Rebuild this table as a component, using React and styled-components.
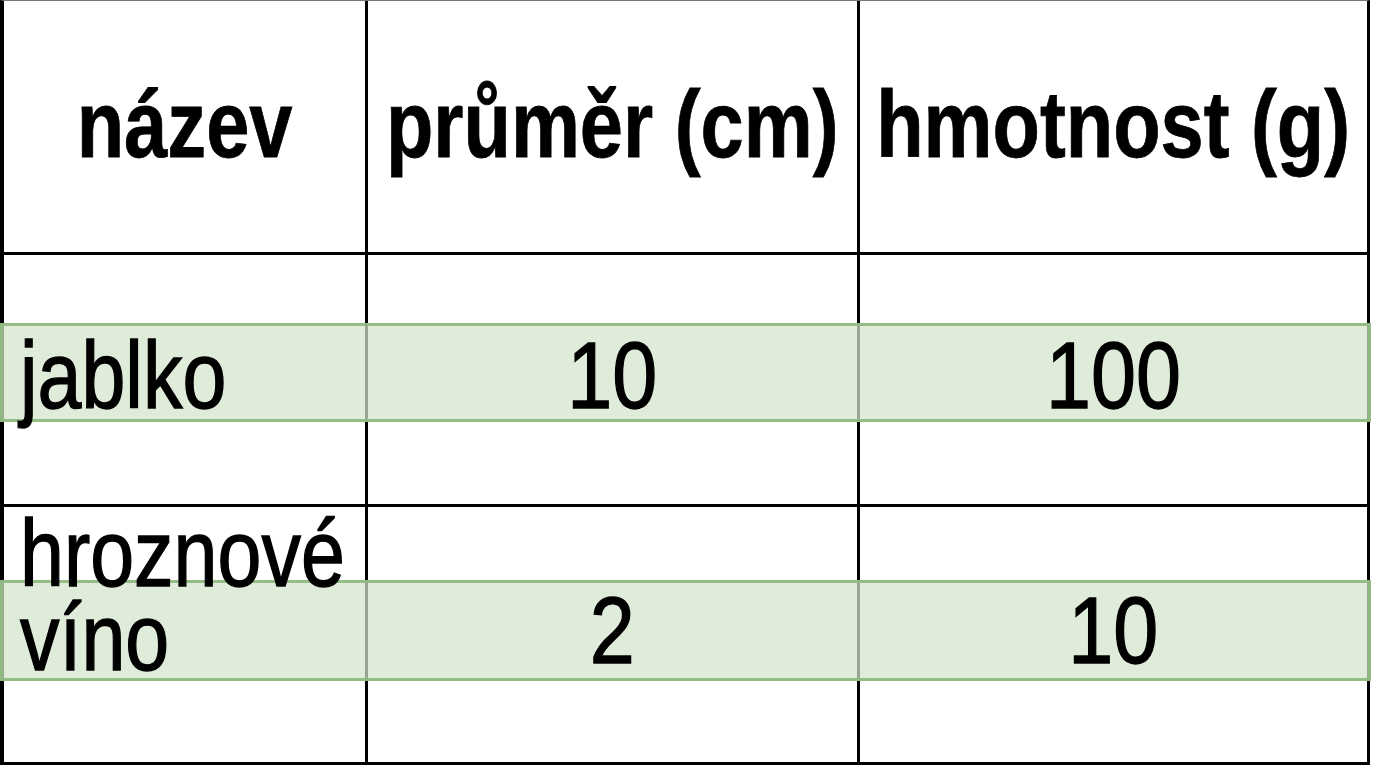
import React from 'react';
import styled, { createGlobalStyle } from 'styled-components';

const GlobalStyle = createGlobalStyle`
  body {
    margin: 0;
    background: #fff;
    overflow: hidden;
  }
`

const Sheet = styled.div`
  position: relative;
  width: 1376px;
  height: 768px;
  background: #fff;
`

const Grid = styled.div`
  display: grid;
  grid-template-columns: 361px 489px 507px;
  grid-template-rows: 251px 249px 255px;
  gap: 3px;
  width: 1370px;
  box-sizing: border-box;
  background: #000;
  border-top: 1px solid #777;
  border-left: 4px solid #000;
  border-right: 3px solid #000;
  border-bottom: 3px solid #000;
`

const Cell = styled.div`
  background: #fff;
  display: flex;
  align-items: ${p => (p.$top ? 'flex-start' : 'center')};
  justify-content: ${p => (p.$left ? 'flex-start' : 'center')};
  padding-left: ${p => (p.$left ? '16px' : '0')};
  padding-top: ${p => (p.$top ? '5px' : '0')};
  padding-bottom: ${p => (p.$head ? '4px' : p.$top ? '0' : '8px')};
  box-sizing: border-box;
  font-family: "Liberation Sans", Arial, sans-serif;
  font-size: 94px;
  line-height: 84px;
  font-weight: ${p => (p.$head ? 700 : 400)};
  color: #000;
`

// the sheet's lettering is horizontally squeezed, like Arial Narrow
const Text = styled.span`
  position: relative;
  z-index: 2;
  display: inline-block;
  flex-shrink: 0;
  white-space: pre;
  transform: scaleX(${p => p.$squeeze});
  transform-origin: ${p => (p.$left ? 'left' : 'center')} center;
  -webkit-text-stroke: ${p => p.$stroke || 0}px #000;
`

const Band = styled.div`
  position: absolute;
  left: 0;
  width: 1371px;
  box-sizing: border-box;
  background: rgba(212, 228, 204, 0.72);
  border: 3px solid rgba(142, 186, 128, 0.92);
  z-index: 1;
`

const headers = ['název', 'průměr (cm)', 'hmotnost (g)']

const rows = [
  ['jablko', '10', '100', false],
  ['hroznové\nvíno', '2', '10', true],
]

const App = () => {
  return (
    <Sheet>
      <GlobalStyle />
      <Grid>
        {headers.map(h => (
          <Cell key={h} $head><Text $squeeze={0.825} $stroke={0.8}>{h}</Text></Cell>
        ))}
        {rows.map(([name, size, weight, tall]) => (
          <React.Fragment key={name}>
            <Cell $left $top={tall}><Text $left $squeeze={0.84} $stroke={1.4}>{name}</Text></Cell>
            <Cell><Text $squeeze={0.86} $stroke={1.4}>{size}</Text></Cell>
            <Cell><Text $squeeze={0.86} $stroke={1.4}>{weight}</Text></Cell>
          </React.Fragment>
        ))}
      </Grid>
      <Band style={{ top: 323, height: 99 }} />
      <Band style={{ top: 580, height: 101 }} />
    </Sheet>
  )
}

export default App;
